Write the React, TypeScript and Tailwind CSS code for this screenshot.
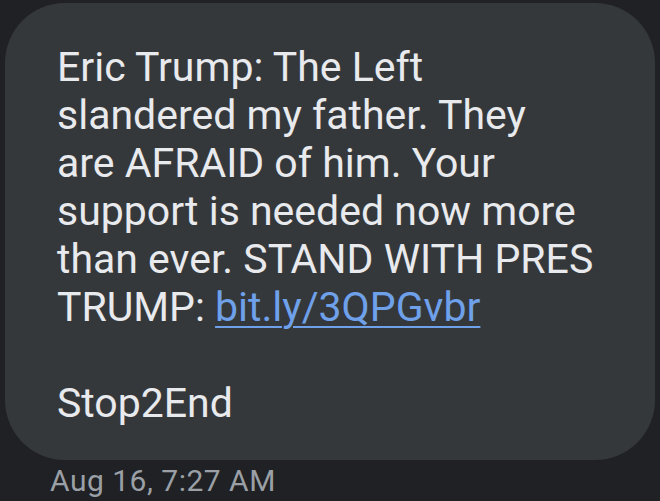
export default function App() {
  return (
    <div
      className="w-[660px] h-[501px] bg-[#202124] overflow-hidden"
      style={{ fontFamily: 'Roboto, "Noto Sans", sans-serif' }}
    >
      <div className="ml-[5px] mt-[3px] w-[650px] h-[457px] rounded-[60px] bg-[#35383b] pl-[52px] pt-[40px]">
        <p className="text-[41px] leading-[48px] text-[#e8eaed]">
          Eric Trump: The Left
          <br />
          slandered my father. They
          <br />
          are AFRAID of him. Your
          <br />
          support is needed now more
          <br />
          than ever. STAND WITH PRES
          <br />
          TRUMP:{' '}
          <span className="text-[#6fa0ea] underline decoration-2 underline-offset-[5px]">bit.ly/3QPGvbr</span>
          <br />
          <br />
          Stop2End
        </p>
      </div>
      <div className="pl-[50px] pt-[3px] text-[30px] leading-[36px] tracking-[0.5px] text-[#9aa0a6]">Aug 16, 7:27 AM</div>
    </div>
  );
}
